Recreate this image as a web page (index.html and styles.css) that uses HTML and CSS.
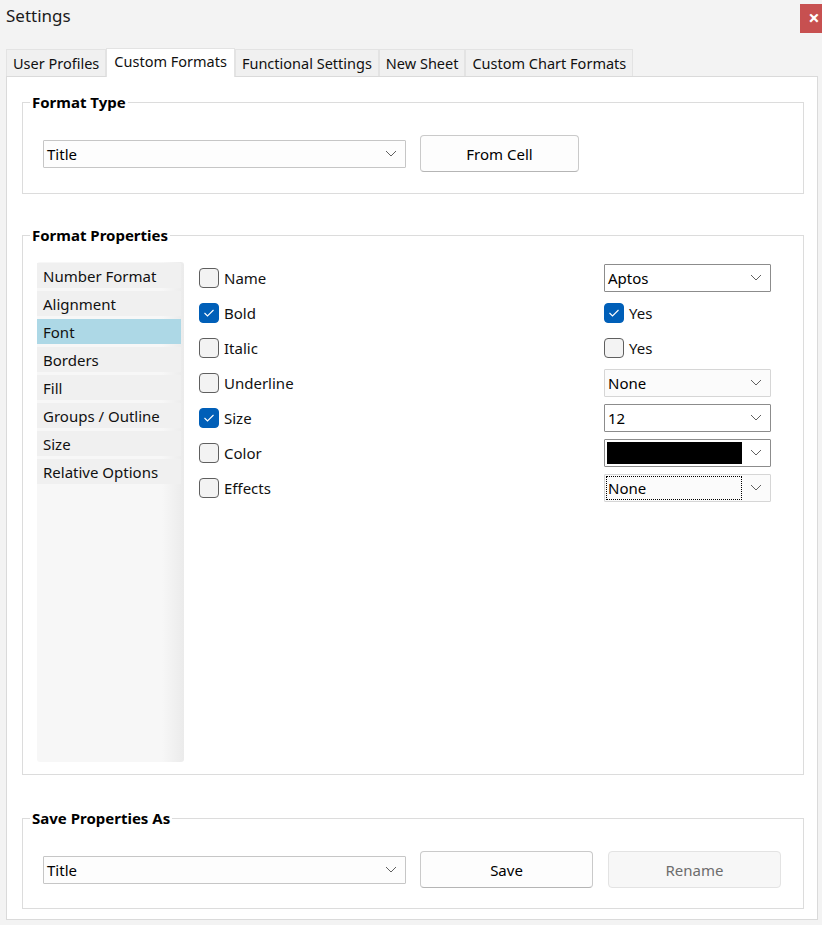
FILE: index.html
```html
<!DOCTYPE html>
<html lang="en">
<head>
  <meta charset="utf-8">
  <title>Settings</title>
  <link rel="stylesheet" href="styles.css">
</head>
<body>
  <!-- Window title bar -->
  <div class="titlebar">
    <span class="title">Settings</span>
    <span class="close">&#215;</span>
  </div>

  <!-- Tabs -->
  <div class="tabs">
    <div class="tab">User Profiles</div>
    <div class="tab active">Custom Formats</div>
    <div class="tab">Functional Settings</div>
    <div class="tab">New Sheet</div>
    <div class="tab">Custom Chart Formats</div>
  </div>

  <div class="panel">
    <!-- Format type -->
    <fieldset class="group group-type">
      <legend>Format Type</legend>
      <div class="group-row">
        <div class="combo combo-wide">
          <span>Title</span>
          <svg class="chev" width="12" height="7" viewBox="0 0 12 7"><polyline points="1,1 6,6 11,1"/></svg>
        </div>
        <button class="btn btn-from">From Cell</button>
      </div>
    </fieldset>

    <!-- Format properties -->
    <fieldset class="group group-props">
      <legend>Format Properties</legend>
      <div class="props-body">
        <ul class="side-list">
          <li>Number Format</li>
          <li>Alignment</li>
          <li class="selected">Font</li>
          <li>Borders</li>
          <li>Fill</li>
          <li>Groups / Outline</li>
          <li>Size</li>
          <li>Relative Options</li>
        </ul>

        <div class="props-grid">
          <label class="check"><span class="box"></span>Name</label>
          <div class="combo combo-dark">
            <span>Aptos</span>
            <svg class="chev" width="12" height="7" viewBox="0 0 12 7"><polyline points="1,1 6,6 11,1"/></svg>
          </div>

          <label class="check"><span class="box on"><svg width="20" height="20" viewBox="0 0 20 20"><polyline points="5.5,10 8.5,13 14.5,7"/></svg></span>Bold</label>
          <label class="check"><span class="box on"><svg width="20" height="20" viewBox="0 0 20 20"><polyline points="5.5,10 8.5,13 14.5,7"/></svg></span>Yes</label>

          <label class="check"><span class="box"></span>Italic</label>
          <label class="check"><span class="box"></span>Yes</label>

          <label class="check"><span class="box"></span>Underline</label>
          <div class="combo combo-light">
            <span>None</span>
            <svg class="chev" width="12" height="7" viewBox="0 0 12 7"><polyline points="1,1 6,6 11,1"/></svg>
          </div>

          <label class="check"><span class="box on"><svg width="20" height="20" viewBox="0 0 20 20"><polyline points="5.5,10 8.5,13 14.5,7"/></svg></span>Size</label>
          <div class="combo combo-dark">
            <span>12</span>
            <svg class="chev" width="12" height="7" viewBox="0 0 12 7"><polyline points="1,1 6,6 11,1"/></svg>
          </div>

          <label class="check"><span class="box"></span>Color</label>
          <div class="combo combo-dark combo-color">
            <span class="swatch"></span>
            <svg class="chev" width="12" height="7" viewBox="0 0 12 7"><polyline points="1,1 6,6 11,1"/></svg>
          </div>

          <label class="check"><span class="box"></span>Effects</label>
          <div class="combo combo-light combo-focus">
            <span class="focus">None</span>
            <svg class="chev" width="12" height="7" viewBox="0 0 12 7"><polyline points="1,1 6,6 11,1"/></svg>
          </div>
        </div>
      </div>
    </fieldset>

    <!-- Save -->
    <fieldset class="group group-save">
      <legend>Save Properties As</legend>
      <div class="group-row">
        <div class="combo combo-wide">
          <span>Title</span>
          <svg class="chev" width="12" height="7" viewBox="0 0 12 7"><polyline points="1,1 6,6 11,1"/></svg>
        </div>
        <button class="btn btn-save">Save</button>
        <button class="btn btn-save" disabled>Rename</button>
      </div>
    </fieldset>
  </div>
</body>
</html>
```

FILE: styles.css
```css
/* Reset */
* {
  margin: 0;
  padding: 0;
  box-sizing: border-box;
}

body {
  background-color: #f3f3f3;
  font-family: "Noto Sans", "Open Sans", sans-serif;
  font-size: 15px;
  color: #000;
}

/* Title bar */
.titlebar {
  height: 37px;
  display: flex;
  justify-content: space-between;
  align-items: flex-start;
}

.titlebar .title {
  font-size: 17px;
  line-height: 32px;
  padding-left: 6px;
  color: #1b1b1b;
}

.close {
  margin-top: 4px;
  width: 22px;
  height: 29px;
  background-color: #c75050;
  color: #fff;
  font-weight: bold;
  font-size: 20px;
  line-height: 28px;
  text-align: center;
  padding-left: 6px;
}

/* Tabs */
.tabs {
  display: flex;
  align-items: flex-end;
  padding-left: 6px;
  margin-top: 11px;
  height: 28px;
}

.tab {
  height: 27px;
  line-height: 26px;
  padding: 0 6px;
  font-size: 14.5px;
  background-color: #f0f0f0;
  border: 1px solid #e3e3e3;
  border-bottom: none;
  color: #111;
  white-space: nowrap;
}

.tab.active {
  height: 29px;
  line-height: 25px;
  padding: 0 7px;
  background-color: #fff;
  margin-bottom: -1px;
  position: relative;
}

/* Main panel */
.panel {
  width: 812px;
  margin-left: 6px;
  background-color: #fff;
  border: 1px solid #dadada;
  padding: 15px 13px 10px 15px;
}

/* Group boxes */
.group {
  border: 1px solid #dcdcdc;
  min-width: 0;
}

.group legend {
  font-weight: bold;
  font-size: 15px;
  line-height: 20px;
  margin-left: 7px;
  padding: 0 2px;
}

.group-props {
  margin-top: 31px;
}

.group-save {
  margin-top: 33px;
}

.group-row {
  display: flex;
  align-items: center;
  gap: 14px;
  padding: 23px 20px 20px 20px;
}

.group-type .group-row {
  padding-bottom: 21px;
}

/* Combo boxes */
.combo {
  height: 28px;
  display: flex;
  align-items: center;
  justify-content: space-between;
  padding: 0 8px 0 3px;
  background-color: #fdfdfd;
  border: 1px solid #c6c6c6;
  border-radius: 1px;
}

.combo-wide {
  width: 363px;
  padding-left: 3px;
}

.combo-dark {
  border-color: #8c8c8c;
  background-color: #fff;
}

.combo-light {
  border-color: #d6d6d6;
  background-color: #fbfbfb;
}

.chev polyline {
  fill: none;
  stroke: #606060;
  stroke-width: 1;
}

.combo-color {
  padding-left: 2px;
}

.swatch {
  width: 135px;
  height: 22px;
  background-color: #000;
}

.combo-focus {
  padding-left: 1px;
}

.focus {
  width: 136px;
  height: 24px;
  line-height: 24px;
  padding-left: 2px;
  outline: 1px dotted #000;
  outline-offset: -1px;
}

/* Buttons */
.btn {
  font-family: inherit;
  font-size: 15px;
  color: #000;
  height: 37px;
  background-color: #fdfdfd;
  border: 1px solid #cacaca;
  border-bottom-color: #b5b5b5;
  border-radius: 4px;
}

.btn-from {
  width: 159px;
}

.btn-save {
  width: 173px;
}

.btn-save + .btn-save {
  margin-left: 1px;
}

.btn:disabled {
  background-color: #f7f7f7;
  border-color: #e3e3e3;
  color: #6d6d6d;
}

/* Format properties body */
.props-body {
  display: flex;
  align-items: flex-start;
  gap: 15px;
  padding: 15px 32px 12px 14px;
}

.side-list {
  list-style: none;
  width: 147px;
  height: 500px;
  margin-top: 2px;
  padding: 1px 3px 0 0;
  border-radius: 3px;
  background: linear-gradient(to right, #f7f7f7 85%, #ebebeb);
}

.side-list li {
  height: 25px;
  line-height: 26px;
  margin-bottom: 3px;
  padding-left: 6px;
  background-color: #f0f0f0;
  color: #111;
}

.side-list li.selected {
  background-color: #add8e6;
}

.props-grid {
  flex: 1;
  display: grid;
  grid-template-columns: 1fr 167px;
  grid-auto-rows: 35px;
  align-items: center;
}

.check {
  display: flex;
  align-items: center;
  gap: 5px;
  color: #111;
}

.box {
  width: 20px;
  height: 20px;
  border: 1px solid #5f5f5f;
  border-radius: 4px;
  background-color: #f3f3f3;
  display: flex;
}

.box.on {
  background-color: #005fb8;
  border-color: #005fb8;
}

.box svg {
  margin: -1px;
}

.box polyline {
  fill: none;
  stroke: #fff;
  stroke-width: 1.1;
}
```
